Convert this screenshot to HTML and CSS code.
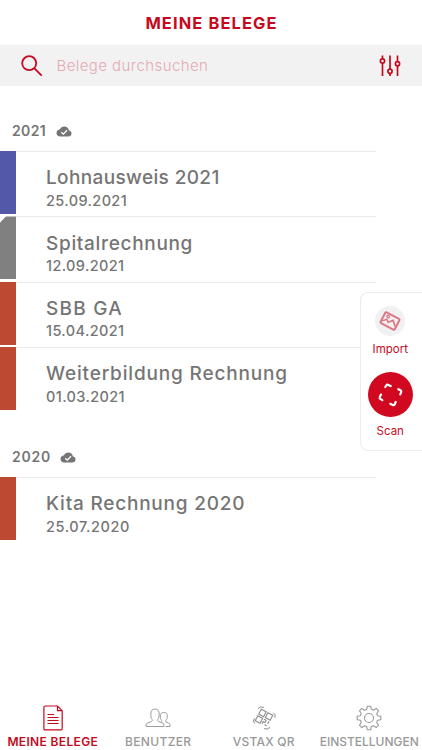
FILE: index.html
```
<!DOCTYPE html>
<html lang="de">
<head>
<meta charset="utf-8">
<title>Meine Belege</title>
<link rel="stylesheet" href="styles.css">
</head>
<body>
<svg class="defs" aria-hidden="true">
  <symbol id="cloud" viewBox="0 0 16 11"><path fill="#757575" d="M12.8 4.2C12.4 2 10.600.6 8.300.6C6.300.6 4.800 1.600 4 3.300C1.900 3.500.5 5 .5 6.900C.5 9 2.100 10.500 4.200 10.500H12.300C14.200 10.500 15.500 9.200 15.500 7.400C15.500 5.700 14.400 4.500 12.800 4.200Z"/><path fill="none" stroke="#fff" stroke-width="1.300" d="M5.300 6.200L7.300 8.100L11 4.300"/></symbol>
</svg>
<main class="app">
  <header class="topbar"><h1>MEINE BELEGE</h1></header>
  <div class="search">
    <svg class="magnifier" viewBox="0 0 22 22"><g fill="none" stroke="#c5091e" stroke-width="1.800"><circle cx="8.200" cy="8.200" r="7"/><path d="M13.200 13.200L20.700 20.700"/></g></svg>
    <span class="placeholder">Belege durchsuchen</span>
    <svg class="sliders" viewBox="0 0 22 22"><g fill="#f2f2f2" stroke="#c5091e" stroke-width="1.700"><path d="M3.500 .5V21M11 .5V21M18.500 .5V21"/><circle cx="3.500" cy="6" r="2.100"/><circle cx="11" cy="16.300" r="2.100"/><circle cx="18.500" cy="8.800" r="2.100"/></g></svg>
  </div>
  <section class="group">
    <h2>2021 <svg viewBox="0 0 16 11"><use href="#cloud"/></svg></h2>
    <article class="row blue"><i class="bar"></i><div class="text"><h3 class="t1">Lohnausweis 2021</h3><p>25.09.2021</p></div></article>
    <article class="row gray"><i class="bar"></i><div class="text"><h3 class="t2">Spitalrechnung</h3><p>12.09.2021</p></div></article>
    <article class="row red"><i class="bar"></i><div class="text"><h3 class="t3">SBB GA</h3><p>15.04.2021</p></div></article>
    <article class="row red"><i class="bar"></i><div class="text"><h3 class="t4">Weiterbildung Rechnung</h3><p>01.03.2021</p></div></article>
  </section>
  <section class="group">
    <h2 class="y20">2020 <svg viewBox="0 0 16 11"><use href="#cloud"/></svg></h2>
    <article class="row red"><i class="bar"></i><div class="text"><h3 class="t5">Kita Rechnung 2020</h3><p class="d5">25.07.2020</p></div></article>
  </section>
  <aside class="actions">
    <div class="import"><svg viewBox="0 0 30 30"><g transform="rotate(28 15 15)" fill="none" stroke="#dc7885" stroke-width="2"><rect x="7" y="9" width="16" height="12" rx="1"/><path stroke-width="1.600" d="M8 18.500L11.500 15L14 17L17.500 13L22 17.500"/><circle cx="11.300" cy="12" r="1.300" stroke-width="1.300"/></g></svg></div>
    <span class="import-label">Import</span>
    <div class="scan"><svg viewBox="0 0 45 45"><g fill="none" stroke="#fff" stroke-width="2.200" stroke-linecap="round" stroke-linejoin="round"><path d="M17.300 15L18.200 13.600Q19 12.300 20.300 12.900L22.700 14"/><path d="M30.300 17.200L32.500 18.300Q33.700 19 33.100 20.400L32.200 22.400"/><path d="M27.700 30L26.800 32.200Q26.100 33.500 24.700 32.900L22.300 31.800"/><path d="M13 22.600L11.800 25Q11.300 26.400 12.600 27.100L14.300 28.100"/></g></svg></div>
    <span class="scan-label">Scan</span>
  </aside>
  <nav class="tabs">
    <a class="tab active"><svg viewBox="0 0 26 26"><g fill="none" stroke="#c5091e" stroke-width="1.200"><path d="M5.200 1H17.500L22.200 5.700V23.500Q22.200 24.800 20.900 24.800H5.200Q3.900 24.800 3.900 23.500V2.300Q3.900 1 5.200 1ZM17.500 1V5.700H22.200M7.500 9.500H14M7.500 12.500H18.500M7.500 15.500H18.500M7.500 18.500H18.500"/></g></svg><span>MEINE BELEGE</span></a>
    <a class="tab users"><svg viewBox="0 0 26 26"><g fill="none" stroke="#9c9c9c" stroke-width="1"><path d="M1 21.500V20Q1 18.500 3 17.800L6.500 16.500Q7.700 16 7.200 14.500C6 13 5.800 11.500 5.800 9C5.800 5.700 7.200 4 10 4S14.200 5.700 14.200 9C14.200 11.500 13.800 13 12.700 14.500Q12.300 16 13.500 16.500L17 17.800Q19 18.500 19 20V21.500Z"/><path d="M20.500 21.500H25V20Q25 18.600 23.500 18L21 17Q20.300 16.500 20.800 15.500C22 14.300 22.300 13 22.300 11C22.300 8.700 21 7.500 18.800 7.500S15.300 8.700 15.300 11C15.300 13 15.700 14.300 16.700 15.500Q17 16.500 16.200 17"/></g></svg><span>BENUTZER</span></a>
    <a class="tab qr"><svg viewBox="0 0 26 26"><g fill="none" stroke="#8c8c8c" stroke-width="1.100"><g transform="rotate(28 13 13)"><rect x="6.500" y="6.500" width="5.500" height="5.500"/><rect x="14" y="6.500" width="5.500" height="5.500"/><rect x="6.500" y="14" width="5.500" height="5.500"/><path d="M13.500 14H16V16.500H14V19M19 13.500V16.500M16.500 18.500H19"/></g><path stroke-linecap="round" stroke-width="1" d="M7.300 3.300Q9.500 1 12.500 2.200M22.500 8Q25.500 9.500 24 12.500M18.700 22.700Q16.500 25 13.500 23.800M3.300 13.500Q.8 16.500 3.500 18.300"/></g></svg><span>VSTAX QR</span></a>
    <a class="tab settings"><svg viewBox="0 0 26 26"><g fill="none" stroke="#999" stroke-width="1.100"><circle cx="13" cy="13" r="4.500"/><path stroke-linejoin="round" d="M11.300 1.200H14.700L15.300 4.400L17.500 5.300L20.200 3.400L22.600 5.800L20.700 8.500L21.600 10.700L24.800 11.300V14.700L21.600 15.300L20.700 17.500L22.600 20.200L20.200 22.600L17.500 20.700L15.300 21.600L14.700 24.800H11.300L10.700 21.600L8.500 20.700L5.800 22.600L3.400 20.200L5.300 17.500L4.400 15.300L1.200 14.700V11.300L4.400 10.700L5.300 8.500L3.400 5.800L5.800 3.400L8.500 5.300L10.700 4.400Z"/></g></svg><span>EINSTELLUNGEN</span></a>
  </nav>
</main>
</body>
</html>
```
FILE: styles.css
```
* { box-sizing: border-box; }
body { margin: 0; background: #fff; font-family: Inter, sans-serif; color: #757575; }
h1, h2, h3, p { margin: 0; white-space: nowrap; }
svg { display: block; flex: none; }
.defs { position: absolute; width: 0; height: 0; }
.app { position: relative; width: 422px; height: 750px; overflow: hidden; display: flex; flex-direction: column; }
.topbar { height: 45px; flex: none; display: flex; justify-content: center; align-items: center; }
h1 { font-size: 16.500px; line-height: 20px; font-weight: 700; color: #c5091e; letter-spacing: 1.080px; padding: 1px 0 0 1px; }
.search { height: 41px; flex: none; background: #f2f2f2; display: flex; align-items: center; padding: 0 21px; }
.magnifier { width: 22px; height: 22px; }
.placeholder { flex: 1; margin-left: 13.500px; font-size: 15px; font-weight: 300; line-height: 20px; color: #e5aab3; letter-spacing: .430px; }
.sliders { width: 22px; height: 22px; }
.group { flex: none; }
h2 { height: 65.200px; display: flex; align-items: center; gap: 9.500px; padding: 25px 0 0 12px; font-size: 14px; line-height: 18px; font-weight: 600; letter-spacing: .350px; }
.y20 { letter-spacing: .8px; gap: 8.500px; }
h2 svg { width: 16px; height: 11px; }
.row { height: 65.200px; width: 376px; display: flex; }
.bar { width: 16px; height: 63px; flex: none; background: #be4932; }
.blue .bar { background: #5459a7; }
.gray .bar { background: #808080; clip-path: polygon(6px 0, 100% 0, 100% 100%, 0 100%, 0 6px); }
.text { flex: 1; border-top: 1px solid #e9e9e9; padding: 14.300px 0 0 30px; }
h3 { font-size: 19px; line-height: 24px; font-weight: 500; }
.t1 { letter-spacing: .370px; }
.t2 { letter-spacing: .680px; }
.t3 { letter-spacing: 1.250px; }
.t4 { letter-spacing: .830px; }
.t5 { letter-spacing: .780px; }
.text p { font-size: 14.500px; line-height: 18px; margin-top: 1.500px; font-weight: 500; letter-spacing: .380px; }
.text .d5 { letter-spacing: .6px; }
.actions { position: absolute; left: 360px; top: 292px; width: 63px; height: 159px; border: 1px solid #ececec; border-right: 0; border-radius: 8px 0 0 8px; background: #fff; display: flex; flex-direction: column; align-items: center; padding: 13px 3.500px 0 0; color: #c5091e; font-size: 11.500px; line-height: 14px; }
.import { width: 30px; height: 30px; border-radius: 50%; background: #f1f1f3; }
.import-label { margin-top: 6px; }
.scan { width: 45px; height: 45px; border-radius: 50%; background: #d00920; margin-top: 16px; }
.scan-label { margin-top: 7px; }
.tabs { margin-top: auto; height: 50px; display: grid; grid-template-columns: repeat(4, 105.500px); }
.tab { display: flex; flex-direction: column; align-items: center; padding-top: 5px; color: #999; font-size: 12px; line-height: 16px; font-weight: 500; white-space: nowrap; }
.tab svg { width: 26px; height: 26px; }
.tab span { margin-top: 3px; }
.users span { letter-spacing: .350px; }
.qr span { letter-spacing: .2px; }
.active { color: #c5091e; font-weight: 600; letter-spacing: .350px; }
```
